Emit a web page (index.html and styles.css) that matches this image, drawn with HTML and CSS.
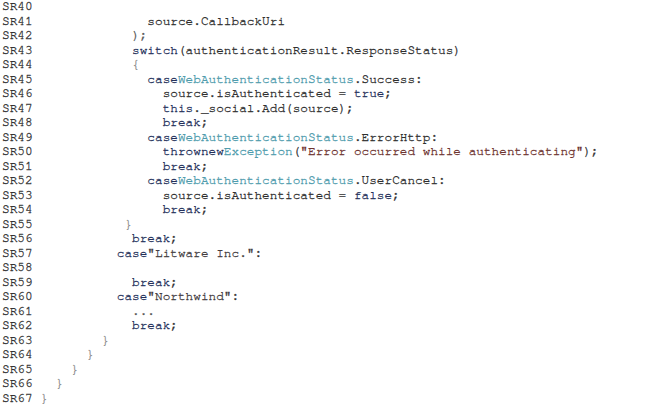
FILE: index.html
```html
<!DOCTYPE html>
<html>
<head>
<meta charset="utf-8">
<link rel="stylesheet" href="styles.css">
</head>
<body>
<div class="code">
<div class="row"><span class="ln">SR40</span></div>
<div class="row"><span class="ln">SR41</span><span class="src">              source.CallbackUri</span></div>
<div class="row"><span class="ln">SR42</span><span class="src">            <span class="p">);</span></span></div>
<div class="row"><span class="ln">SR43</span><span class="src">            <span class="kw">switch</span>(authenticationResult.ResponseStatus)</span></div>
<div class="row"><span class="ln">SR44</span><span class="src">            <span class="br">{</span></span></div>
<div class="row"><span class="ln">SR45</span><span class="src">              <span class="kw">case</span><span class="ty">WebAuthenticationStatus</span>.Success:</span></div>
<div class="row"><span class="ln">SR46</span><span class="src">                source.isAuthenticated = <span class="kw">true</span>;</span></div>
<div class="row"><span class="ln">SR47</span><span class="src">                <span class="kw">this</span>._social.Add(source);</span></div>
<div class="row"><span class="ln">SR48</span><span class="src">                <span class="kw">break</span>;</span></div>
<div class="row"><span class="ln">SR49</span><span class="src">              <span class="kw">case</span><span class="ty">WebAuthenticationStatus</span>.ErrorHttp:</span></div>
<div class="row"><span class="ln">SR50</span><span class="src">                <span class="kw">thrownew</span><span class="ty">Exception</span>(<span class="str">"Error occurred while authenticating"</span>);</span></div>
<div class="row"><span class="ln">SR51</span><span class="src">                <span class="kw">break</span>;</span></div>
<div class="row"><span class="ln">SR52</span><span class="src">              <span class="kw">case</span><span class="ty">WebAuthenticationStatus</span>.UserCancel:</span></div>
<div class="row"><span class="ln">SR53</span><span class="src">                source.isAuthenticated = <span class="kw">false</span>;</span></div>
<div class="row"><span class="ln">SR54</span><span class="src">                <span class="kw">break</span>;</span></div>
<div class="row"><span class="ln">SR55</span><span class="src">           <span class="br">}</span></span></div>
<div class="row"><span class="ln">SR56</span><span class="src">            <span class="kw">break</span>;</span></div>
<div class="row"><span class="ln">SR57</span><span class="src">          <span class="kw">case</span><span class="str2">"Litware Inc."</span>:</span></div>
<div class="row"><span class="ln">SR58</span></div>
<div class="row"><span class="ln">SR59</span><span class="src">            <span class="kw">break</span>;</span></div>
<div class="row"><span class="ln">SR60</span><span class="src">          <span class="kw">case</span><span class="str2">"Northwind"</span>:</span></div>
<div class="row"><span class="ln">SR61</span><span class="src">            <span class="p">...</span></span></div>
<div class="row"><span class="ln">SR62</span><span class="src">            <span class="kw">break</span>;</span></div>
<div class="row"><span class="ln">SR63</span><span class="src">        <span class="br">}</span></span></div>
<div class="row"><span class="ln">SR64</span><span class="src">      <span class="br">}</span></span></div>
<div class="row"><span class="ln">SR65</span><span class="src">    <span class="br">}</span></span></div>
<div class="row"><span class="ln">SR66</span><span class="src">  <span class="br">}</span></span></div>
<div class="row"><span class="ln">SR67</span><span class="src"><span class="br">}</span></span></div>
</div>
</body>
</html>
```
FILE: styles.css
```css
html, body {
  margin: 0;
  padding: 0;
  background: #ffffff;
}
.code {
  padding: 0 0 0 2px;
  font-family: FreeMono, "Liberation Mono", "Courier New", monospace;
  font-size: 12.75px;
  line-height: 14.5px;
  color: #2e2e2e;
  -webkit-text-stroke: 0.3px currentColor;
}
.row {
  display: flex;
  height: 14.5px;
  white-space: pre;
}
.ln {
  width: 5ch;
  color: #333333;
}
.src {
  white-space: pre;
}
.kw { color: #24305a; }
.ty { color: #4f9cad; }
.str { color: #6e3430; }
.str2 { color: #433c40; }
.br { color: #8a8a8a; }
.p { color: #555555; }
```
